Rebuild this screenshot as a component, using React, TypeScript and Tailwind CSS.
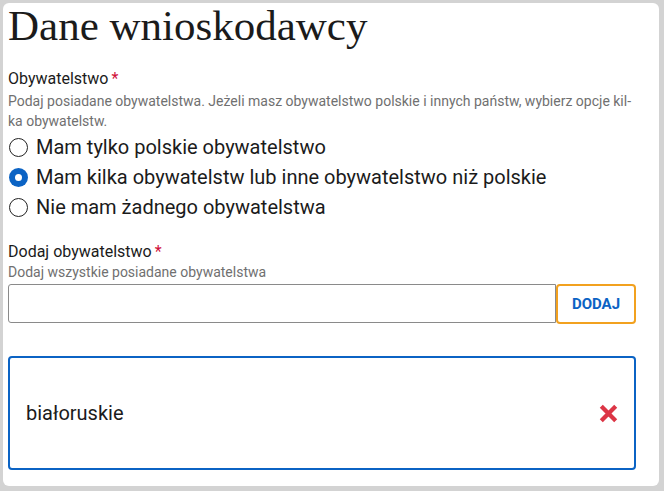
import { useState } from 'react';

const options = [
  'Mam tylko polskie obywatelstwo',
  'Mam kilka obywatelstw lub inne obywatelstwo niż polskie',
  'Nie mam żadnego obywatelstwa',
];

function Radio({ checked }: { checked: boolean }) {
  return checked ? (
    <span className="w-[19px] h-[19px] rounded-full bg-[#0b63c4] flex items-center justify-center shrink-0">
      <span className="w-[7px] h-[7px] rounded-full bg-white" />
    </span>
  ) : (
    <span className="w-[19px] h-[19px] rounded-full border-[1.5px] border-[#222] bg-white shrink-0" />
  );
}

export default function App() {
  const [selected, setSelected] = useState(1);
  const [items, setItems] = useState(['białoruskie']);

  return (
    <div className="w-[664px] h-[491px] bg-[#d3d3d3] pl-[3px] pr-[5px] pt-[3px] pb-[5px] font-['Roboto',sans-serif]">
      <div className="h-full bg-white rounded-[6px] pl-[5px] pr-[23px]">
        <h1 className="font-['Liberation_Serif',serif] text-[43px] leading-[46px] text-[#1b1b1b]">
          Dane wnioskodawcy
        </h1>

        <div className="mt-[21px] text-[16px] leading-[18px] text-[#1b1b1b]">
          Obywatelstwo<span className="text-[#d0103a] ml-[3px]">*</span>
        </div>
        <p className="mt-[3px] text-[14px] leading-[20px] text-[#707070]">
          Podaj posiadane obywatelstwa. Jeżeli masz obywatelstwo polskie i innych państw, wybierz opcje kil-
          <br />
          ka obywatelstw.
        </p>

        <div className="mt-[1px] flex flex-col">
          {options.map((o, i) => (
            <label key={o} onClick={() => setSelected(i)} className="flex items-center gap-[8px] h-[30px] pl-[1px] cursor-pointer">
              <Radio checked={selected === i} />
              <span className="text-[20px] text-[#1b1b1b]">{o}</span>
            </label>
          ))}
        </div>

        <div className="mt-[21px] text-[16px] leading-[18px] text-[#1b1b1b]">
          Dodaj obywatelstwo<span className="text-[#d0103a] ml-[3px]">*</span>
        </div>
        <p className="mt-[3px] text-[14px] leading-[16px] text-[#707070]">Dodaj wszystkie posiadane obywatelstwa</p>

        <div className="mt-[4px] flex h-[40px]">
          <input className="flex-1 h-[39px] border border-[#8a8a8a] rounded-l-[3px] outline-none px-3 text-[16px]" />
          <button className="w-[80px] h-[40px] border-2 border-[#f2a11f] rounded-[4px] text-[#0b63c4] font-bold text-[15px]">
            DODAJ
          </button>
        </div>

        <div className="mt-[32px] flex flex-col gap-2">
          {items.map((it) => (
            <div key={it} className="h-[114px] border-2 border-[#0b63c4] rounded-[4px] flex items-center justify-between pl-[16px] pr-[16px]">
              <span className="text-[20px] text-[#1b1b1b]">{it}</span>
              <button onClick={() => setItems(items.filter((x) => x !== it))} className="text-[#dc3545]">
                <svg width="19" height="19" viewBox="0 0 20 20">
                  <path d="M4 4 L16 16 M16 4 L4 16" stroke="currentColor" strokeWidth="4.5" strokeLinecap="square" />
                </svg>
              </button>
            </div>
          ))}
        </div>
      </div>
    </div>
  );
}
